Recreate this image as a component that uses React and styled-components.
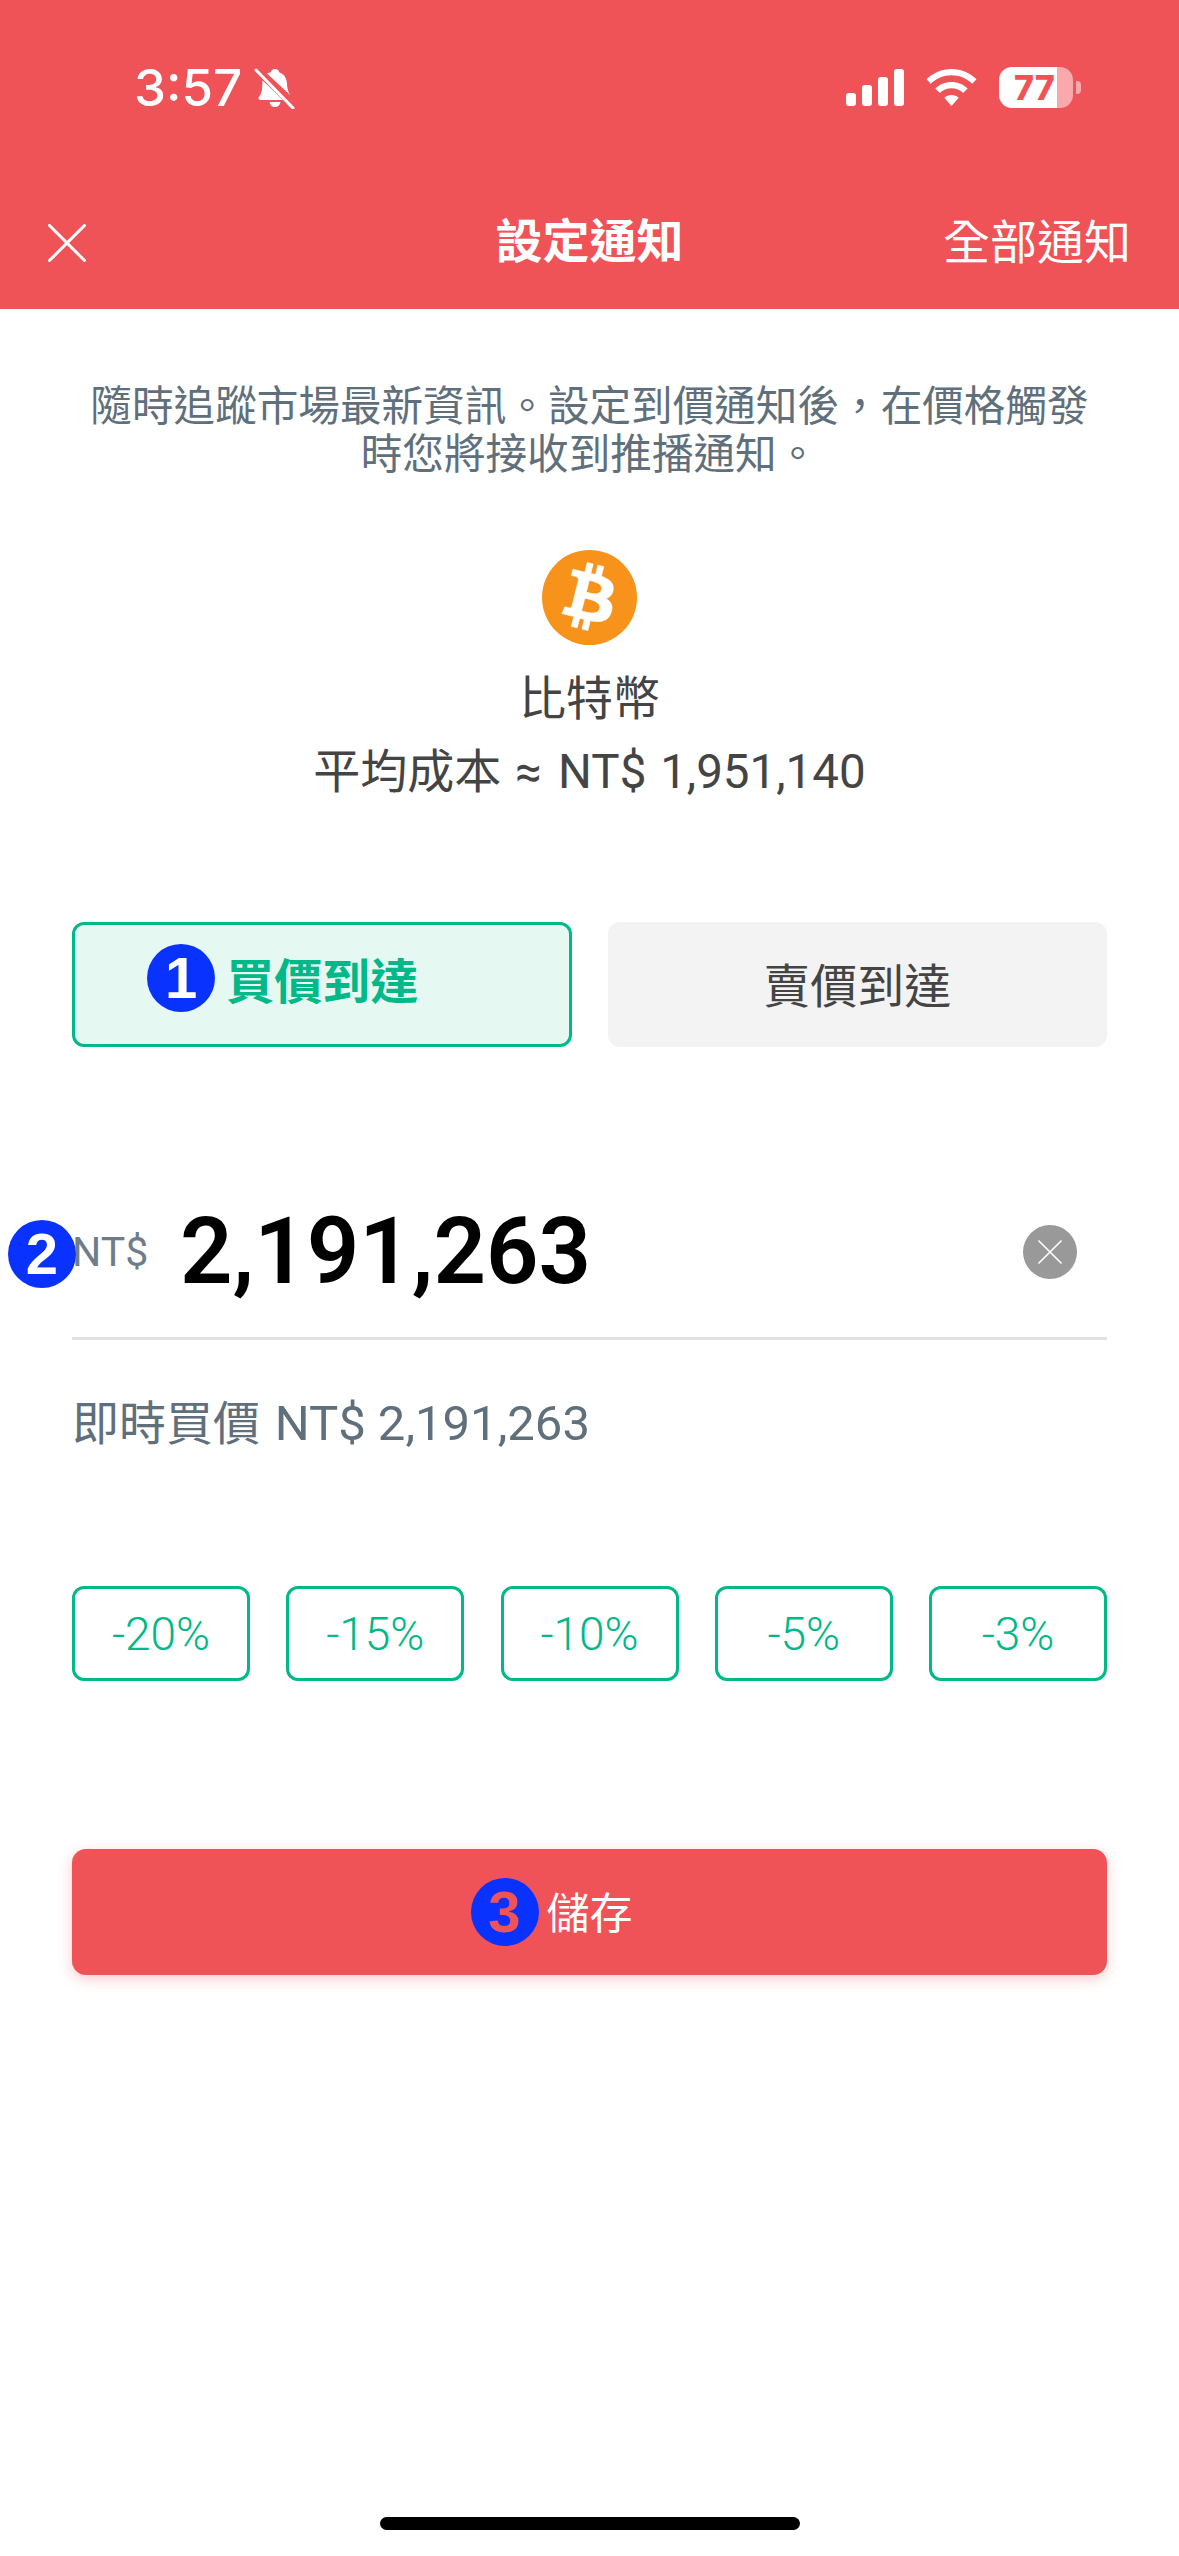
import React from "react";
import styled, { createGlobalStyle } from "styled-components";

const RED = "#ef5357";
const GREEN = "#00b888";
const LATIN = `Roboto, "Noto Sans CJK TC", sans-serif`;

const GlobalStyle = createGlobalStyle`
  * { box-sizing: border-box; }
  html, body { margin: 0; padding: 0; background: #fff; }
  body { font-family: ${LATIN}; }
`;

const percents = ["-20%", "-15%", "-10%", "-5%", "-3%"];

const BellOff = () => (
  <svg width="42" height="42" viewBox="0 0 42 42">
    <path
      fill="#fff"
      d="M21 2c2.5 0 4 1.6 4.4 3.6 5 1.6 7.4 6 7.6 11 .2 5 1 8.5 3.4 11.6L13 6.5c1.300-.6 2.300-.9 3.600-.9C17 3.600 18.500 2 21 2ZM8.400 13.500 31 33H6.500c-1.800 0-2.700-2-1.500-3.300 2.200-2.500 3-5.700 3.200-10.200.1-2.200.2-4.200.2-6Z"
    />
    <path fill="#fff" d="M15.500 35h11c-.4 3-2.600 5-5.500 5s-5.100-2-5.500-5Z" />
    <path stroke={RED} strokeWidth="6" d="M2 2l38 38" />
    <path stroke="#fff" strokeWidth="3" strokeLinecap="round" d="M2 3l37 38" />
  </svg>
);

const Signal = () => (
  <svg width="58" height="37" viewBox="0 0 58 37" fill="#fff">
    <rect x="0" y="24" width="10" height="13" rx="3" />
    <rect x="16" y="16" width="10" height="21" rx="3" />
    <rect x="32" y="8" width="10" height="29" rx="3" />
    <rect x="48" y="0" width="10" height="37" rx="3" />
  </svg>
);

const Wifi = () => (
  <svg width="51" height="37" viewBox="0 0 51 37" fill="#fff">
    <path d="M25.500 0c9.700 0 18.500 3.900 25 10.200l-4.300 4.500C40.800 9.500 33.500 6.300 25.500 6.300S10.200 9.500 4.800 14.700L.5 10.200C7 3.900 15.800 0 25.500 0Z" />
    <path d="M25.500 13c6.200 0 11.900 2.400 16.100 6.400l-4.400 4.500c-3-2.900-7.100-4.600-11.700-4.600s-8.700 1.700-11.700 4.600l-4.400-4.500c4.200-4 9.900-6.400 16.100-6.400Z" />
    <path d="M25.500 26c2.800 0 5.300 1 7.200 2.800L25.500 37l-7.200-8.200c1.900-1.800 4.400-2.800 7.200-2.800Z" />
  </svg>
);

const CloseIcon = ({ size = 38, stroke = 3 }) => (
  <svg width={size} height={size} viewBox="0 0 38 38">
    <path stroke="#fff" strokeWidth={stroke} strokeLinecap="round" d="M1.500 1.500l35 35M36.500 1.500l-35 35" />
  </svg>
);

const BitcoinLogo = () => (
  <svg width="95" height="95" viewBox="0 0 64 64">
    <circle cx="32" cy="32" r="32" fill="#f7931a" />
    <g transform="translate(32 32) scale(1.13) translate(-32 -32)">
      <path
        fill="#fff"
        stroke="#fff"
        strokeWidth="0.4"
        d="M46.103 27.444c.637-4.258-2.605-6.547-7.038-8.074l1.438-5.768-3.511-.875-1.400 5.616c-.923-.23-1.871-.447-2.813-.662l1.410-5.653-3.509-.875-1.439 5.766c-.764-.174-1.514-.346-2.242-.527l.004-.018-4.842-1.209-.934 3.750s2.605.597 2.550.634c1.422.355 1.679 1.296 1.636 2.042l-1.638 6.571c.098.025.225.061.365.117l-.371-.092-2.296 9.205c-.174.432-.615 1.080-1.609.834.035.051-2.552-.637-2.552-.637l-1.743 4.019 4.569 1.139c.850.213 1.683.436 2.503.646l-1.453 5.834 3.507.875 1.439-5.772c.958.260 1.888.500 2.798.726l-1.434 5.745 3.511.875 1.453-5.823c5.987 1.133 10.489.676 12.384-4.739 1.527-4.360-.076-6.875-3.226-8.515 2.294-.529 4.022-2.038 4.483-5.155zm-8.022 11.249c-1.085 4.360-8.426 2.003-10.806 1.412l1.928-7.729c2.380.594 10.012 1.770 8.878 6.317zm1.086-11.312c-.990 3.966-7.100 1.951-9.082 1.457l1.748-7.010c1.982.494 8.365 1.416 7.334 5.553z"
      />
    </g>
  </svg>
);

export default function App() {
  return (
    <Page>
      <GlobalStyle />
      <Header>
        <StatusBar>
          <StatusLeft>
            <Clock>3:57</Clock>
            <BellOff />
          </StatusLeft>
          <StatusRight>
            <Signal />
            <Wifi />
            <Battery>
              <BatteryBody>
                <BatteryLevel>77</BatteryLevel>
              </BatteryBody>
              <BatteryNub />
            </Battery>
          </StatusRight>
        </StatusBar>
        <NavBar>
          <NavClose>
            <CloseIcon />
          </NavClose>
          <NavTitle>設定通知</NavTitle>
          <NavAction>全部通知</NavAction>
        </NavBar>
      </Header>

      <Content>
        <Intro>
          隨時追蹤市場最新資訊。設定到價通知後&#xFF0C;在價格觸發
          <br />
          時您將接收到推播通知。
        </Intro>

        <Coin>
          <BitcoinLogo />
          <CoinName>比特幣</CoinName>
          <CoinCost>
            平均成本 ≈ <Figure $size={47.5}>NT$ 1,951,140</Figure>
          </CoinCost>
        </Coin>

        <Tabs>
          <Tab $active>
            <Badge>1</Badge>
            <TabLabel>買價到達</TabLabel>
          </Tab>
          <Tab>賣價到達</Tab>
        </Tabs>

        <InputRow>
          <FloatingBadge>
            <Badge>2</Badge>
          </FloatingBadge>
          <Currency>NT$</Currency>
          <Amount>2,191,263</Amount>
          <ClearButton>
            <CloseIcon size={24} stroke={2.500} />
          </ClearButton>
        </InputRow>

        <LivePrice>
          即時買價 <Figure $size={49}>NT$ 2,191,263</Figure>
        </LivePrice>

        <Percents>
          {percents.map((p) => (
            <PercentButton key={p}>{p}</PercentButton>
          ))}
        </Percents>

        <SaveButton>
          <Badge $digit={RED}>3</Badge>
          <SaveLabel>儲存</SaveLabel>
        </SaveButton>
      </Content>

      <HomeIndicator />
    </Page>
  );
}

const Page = styled.div`
  width: 1179px;
  height: 2556px;
  display: flex;
  flex-direction: column;
  background: #fff;
  overflow: hidden;
`;

const Header = styled.header`
  height: 309px;
  background: ${RED};
  color: #fff;
`;

const StatusBar = styled.div`
  height: 176px;
  padding: 67px 98px 0 134px;
  display: flex;
  justify-content: space-between;
  align-items: flex-start;
`;

const StatusLeft = styled.div`
  display: flex;
  align-items: center;
  gap: 12px;
  height: 42px;
`;

const Clock = styled.span`
  font-family: Inter, sans-serif;
  font-size: 51px;
  font-weight: 500;
  line-height: 42px;
`;

const StatusRight = styled.div`
  display: flex;
  align-items: center;
  gap: 22px;
  height: 41px;
`;

const Battery = styled.div`
  display: flex;
  align-items: center;
  gap: 3px;
`;

const BatteryBody = styled.div`
  width: 74px;
  height: 41px;
  padding-left: 15px;
  border-radius: 13px;
  background: linear-gradient(to right, #fff 58px, #f9a9ac 58px);
  display: flex;
  align-items: center;
`;

const BatteryLevel = styled.span`
  font-family: Inter, sans-serif;
  font-size: 34px;
  font-weight: 800;
  color: ${RED};
  line-height: 1;
`;

const BatteryNub = styled.div`
  width: 5px;
  height: 13px;
  border-radius: 0 4px 4px 0;
  background: #f9a9ac;
`;

const NavBar = styled.div`
  height: 133px;
  padding: 0 48px;
  position: relative;
  display: flex;
  align-items: center;
  justify-content: space-between;
  font-size: 47px;
`;

const NavClose = styled.div`
  width: 38px;
  height: 38px;
  display: flex;
`;

const NavTitle = styled.div`
  position: absolute;
  left: 0;
  right: 0;
  top: 36px;
  text-align: center;
  font-weight: 700;
  line-height: 60px;
`;

const NavAction = styled.div`
  line-height: 60px;
`;

const Content = styled.main`
  padding: 74px 72px 0;
  display: flex;
  flex-direction: column;
`;

const Intro = styled.p`
  margin: 0;
  font-size: 41.600px;
  line-height: 48px;
  color: #5f6f7b;
  text-align: center;
  white-space: nowrap;
`;

const Coin = styled.div`
  margin-top: 71px;
  display: flex;
  flex-direction: column;
  align-items: center;
  color: #444;
  font-size: 47px;
  line-height: 60px;
`;

const CoinName = styled.div`
  margin-top: 24px;
`;

const CoinCost = styled.div`
  margin-top: 13px;
  word-spacing: 2px;
`;

const Figure = styled.span`
  font-size: ${(p) => p.$size}px;
  margin-left: 3px;
`;

const Tabs = styled.div`
  margin-top: 120px;
  display: grid;
  grid-template-columns: 1fr 1fr;
  gap: 36px;
`;

const Tab = styled.div`
  height: 125px;
  border-radius: 12px;
  display: flex;
  align-items: center;
  justify-content: center;
  font-size: 47px;
  color: #444;
  background: #f3f3f3;
  padding-bottom: 5px;
  ${(p) =>
    p.$active &&
    `
    background: #e5f8f1;
    border: 3px solid ${GREEN};
    gap: 11px;
    padding: 0 78px 14px 0;
  `}
`;

const TabLabel = styled.span`
  color: ${GREEN};
  font-size: 48px;
  font-weight: 700;
`;

const Badge = styled.span`
  width: 68px;
  height: 68px;
  flex: none;
  border-radius: 50%;
  background: #0a32ff;
  color: ${(p) => p.$digit || "#fff"};
  font-family: "Liberation Sans", Arial, sans-serif;
  font-size: 58px;
  font-weight: 700;
  line-height: 68px;
  text-align: center;
  display: block;
`;

const InputRow = styled.div`
  margin-top: 155px;
  padding-bottom: 35px;
  border-bottom: 3px solid #e2e2e2;
  height: 138px;
  display: flex;
  align-items: center;
  position: relative;
`;

const FloatingBadge = styled.div`
  position: absolute;
  left: -64px;
  top: 18px;
`;

const Currency = styled.span`
  width: 108px;
  font-size: 41px;
  color: #6f7d88;
`;

const Amount = styled.span`
  flex: 1;
  font-size: 92px;
  font-weight: 600;
  color: #000;
  line-height: 100px;
`;

const ClearButton = styled.div`
  width: 54px;
  height: 54px;
  margin-right: 30px;
  border-radius: 50%;
  background: #999;
  display: flex;
  align-items: center;
  justify-content: center;
`;

const LivePrice = styled.div`
  margin-top: 54px;
  font-size: 47px;
  line-height: 60px;
  color: #5f6f7b;
`;

const Percents = styled.div`
  margin-top: 132px;
  display: grid;
  grid-template-columns: repeat(5, 178px);
  justify-content: space-between;
`;

const PercentButton = styled.div`
  height: 95px;
  border: 3px solid ${GREEN};
  border-radius: 12px;
  display: flex;
  align-items: center;
  justify-content: center;
  font-size: 46px;
  font-weight: 300;
  color: ${GREEN};
`;

const SaveButton = styled.div`
  margin-top: 168px;
  height: 126px;
  padding-right: 76px;
  border-radius: 14px;
  background: ${RED};
  box-shadow: 0 4px 14px rgba(240, 83, 89, 0.3);
  color: #fff;
  font-size: 43px;
  display: flex;
  align-items: center;
  justify-content: center;
  gap: 8px;
`;

const SaveLabel = styled.span`
  padding-bottom: 4px;
`;

const HomeIndicator = styled.div`
  margin: auto auto 26px;
  width: 420px;
  height: 13px;
  border-radius: 7px;
  background: #000;
`;
